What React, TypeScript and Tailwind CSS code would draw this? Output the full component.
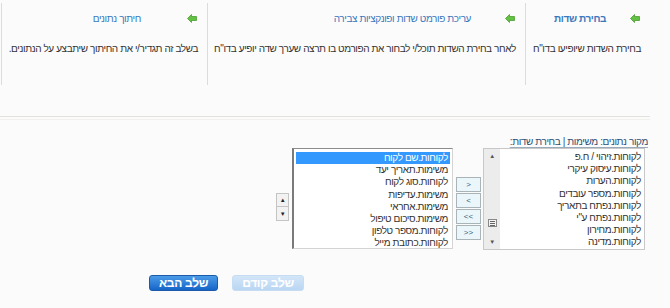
import React from "react";

function GreenArrow() {
  return (
    <svg width="10" height="9" viewBox="0 0 10 9" className="flex-shrink-0">
      <path d="M0.5 4.5 L4.5 0.5 L4.5 2.5 L9.5 2.5 L9.5 6.5 L4.5 6.5 L4.5 8.5 Z" fill="#62c043" stroke="#4a9e32" strokeWidth="0.8" />
    </svg>
  );
}

function Step({
  title,
  text,
  widthClass,
  titleGap,
  bold,
}: {
  title: string;
  text: string;
  widthClass: string;
  titleGap: string;
  bold?: boolean;
}) {
  return (
    <div className={`${widthClass} h-[82px] border-l border-[#dcdcdc] flex flex-col`}>
      <div className="flex items-center h-[16px] mt-[7px] pr-[10px]">
        <GreenArrow />
        <span className={`${titleGap} text-[#3a78bd] whitespace-nowrap ${bold ? "font-bold" : ""}`}>{title}</span>
      </div>
      <div className="mt-[15px] pr-[9px] text-[#333] whitespace-nowrap">{text}</div>
    </div>
  );
}

const selected = [
  "לקוחות.שם לקוח",
  "משימות.תאריך יעד",
  "לקוחות.סוג לקוח",
  "משימות.עדיפות",
  "משימות.אחראי",
  "משימות.סיכום טיפול",
  "לקוחות.מספר טלפון",
  "לקוחות.כתובת מייל",
];

const available = [
  "לקוחות.זיהוי / ח.פ",
  "לקוחות.עיסוק עיקרי",
  "לקוחות.הערות",
  "לקוחות.מספר עובדים",
  "לקוחות.נפתח בתאריך",
  'לקוחות.נפתח ע"י',
  "לקוחות.מחירון",
  "לקוחות.מדינה",
];

function MoveButton({ label }: { label: string }) {
  return (
    <button
      dir="ltr"
      className="w-[25px] h-[15px] bg-[#eaf6fa] border border-[#a9b4b8] text-[8px] tracking-normal leading-none text-[#3a5d7a] flex items-center justify-center"
    >
      {label}
    </button>
  );
}

export default function App() {
  return (
    <div
      dir="rtl"
      className="w-[670px] h-[308px] overflow-hidden bg-[#fbfbfb] text-[10px] tracking-[-0.4px] text-[#333] font-['Liberation_Sans',Arial,sans-serif]"
    >
      <div className="w-[650px] mr-auto">
        {/* Wizard steps */}
        <div className="flex pt-[3px] h-[88px]">
          <Step widthClass="w-[125px]" titleGap="mr-[24px]" title="בחירת שדות" text='בחירת השדות שיופיעו בדו"ח' bold />
          <Step
            widthClass="w-[318px]"
            titleGap="mr-[34px]"
            title="עריכת פורמט שדות ופונקציות צבירה"
            text='לאחר בחירת השדות תוכל/י לבחור את הפורמט בו תרצה שערך שדה יופיע בדו"ח'
          />
          <Step
            widthClass="w-[206px]"
            titleGap="mr-[46px]"
            title="חיתוך נתונים"
            text="בשלב זה תגדיר/י את החיתוך שיתבצע על הנתונים."
          />
        </div>

        <div className="mt-[28px] h-[4px] border-t border-b border-t-[#e3e1da] border-b-[#f1f0ec]" />

        {/* Field chooser */}
        <div className="mt-[16px] pr-[2px] h-[12px] leading-[12px] text-[#2d4f73]">
          <span className="underline decoration-[#9ab] underline-offset-2">מקור נתונים: משימות | בחירת שדות:</span>
        </div>

        <div className="flex items-start pr-[5px]">
          <div className="w-[162px] h-[102px] border border-[#c8c8c8] bg-white flex">
            <div className="flex-1 pt-[2px] pr-[3px] leading-[12.2px]">
              {available.map((f) => (
                <div key={f} className="h-[12.2px] whitespace-nowrap">
                  {f}
                </div>
              ))}
            </div>
            <div className="w-[16px] bg-[#ececec] flex flex-col items-center justify-between py-[4px] text-[#555]">
              <span className="text-[6px] leading-none">▲</span>
              <div className="flex-1" />
              <div className="w-[9px] h-[8px] border border-[#888] bg-[#f4f4f4] flex flex-col justify-center gap-[1px] px-[1px] mb-[12px]">
                <div className="h-px bg-[#666]" />
                <div className="h-px bg-[#666]" />
                <div className="h-px bg-[#666]" />
              </div>
              <span className="text-[6px] leading-none">▼</span>
            </div>
          </div>

          <div className="mr-[2px] mt-[29px] flex flex-col gap-px">
            <MoveButton label=">" />
            <MoveButton label="<" />
            <MoveButton label="<<" />
            <MoveButton label=">>" />
          </div>

          <div className="mr-[3px] w-[161px] h-[101px] bg-white border border-t-[#8c8c8c] border-r-[#d4d4d4] border-b-[#d4d4d4] border-l-2 border-l-[#7a7a7a] px-[2px] pt-[3px] leading-[12.2px]">
            {selected.map((f, i) => (
              <div
                key={f}
                className={`h-[12.2px] pr-[2px] whitespace-nowrap ${i === 0 ? "bg-[#3399ff] text-white" : ""}`}
              >
                {f}
              </div>
            ))}
          </div>

          <div className="mr-[3px] mt-[45px] flex flex-col">
            <button className="w-[13px] h-[14px] bg-[#f2f2f2] border border-[#c4c4c4] text-[6px] leading-none text-[#222] flex items-center justify-center">
              ▲
            </button>
            <button className="w-[13px] h-[14px] bg-[#f2f2f2] border border-t-0 border-[#c4c4c4] text-[6px] leading-none text-[#222] flex items-center justify-center">
              ▼
            </button>
          </div>
        </div>
      </div>

      {/* Navigation */}
      <div dir="ltr" className="flex gap-[14px] pl-[149px] mt-[25px]">
        <button className="w-[69px] h-[16px] rounded-[3px] bg-gradient-to-b from-[#4a9be8] to-[#1565c8] border border-[#1a5aa8] text-white font-bold text-[12px] tracking-[-0.3px] leading-none">
          שלב הבא
        </button>
        <button className="w-[72px] h-[16px] rounded-[3px] bg-gradient-to-b from-[#d3e6f8] to-[#b9d6f3] border border-[#c6dcf2] text-white font-bold text-[12px] tracking-[-0.3px] leading-none">
          שלב קודם
        </button>
      </div>
    </div>
  );
}
